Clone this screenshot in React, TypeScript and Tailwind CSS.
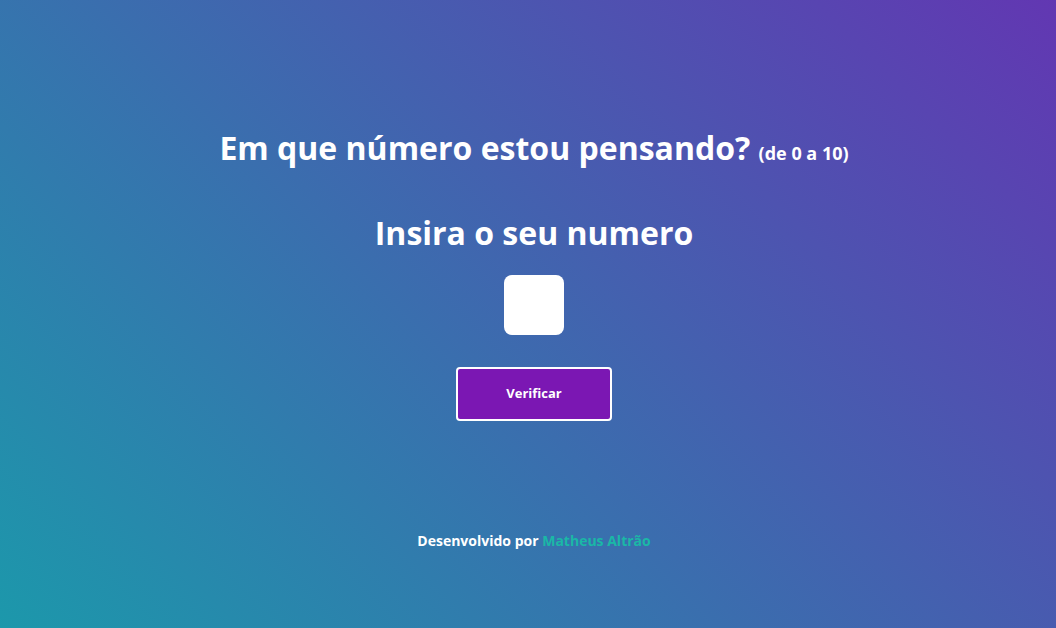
export default function App() {
  return (
    <div
      className="flex h-screen w-full flex-col items-center bg-[linear-gradient(45deg,#1c98ab,#6237b2)] pl-3 text-white"
      style={{ fontFamily: '"Open Sans", sans-serif' }}
    >
      <h1 className="mt-[124px] text-[32px] leading-[48px] font-bold">
        Em que número estou pensando? <span className="text-lg">(de 0 a 10)</span>
      </h1>

      <h2 className="mt-[37px] text-[32px] leading-[48px] font-bold">Insira o seu numero</h2>

      <input
        type="text"
        className="mt-[18px] h-[60px] w-[60px] rounded-lg bg-white text-center text-2xl text-gray-800 outline-none"
      />

      <button
        type="button"
        className="mt-[32px] h-[54px] w-[156px] rounded border-2 border-white bg-[#7b17b3] text-[13px] font-bold"
      >
        Verificar
      </button>

      <p className="mt-[110px] text-sm font-bold">
        Desenvolvido por <span className="text-[#1ab8a6]">Matheus Altrão</span>
      </p>
    </div>
  );
}
